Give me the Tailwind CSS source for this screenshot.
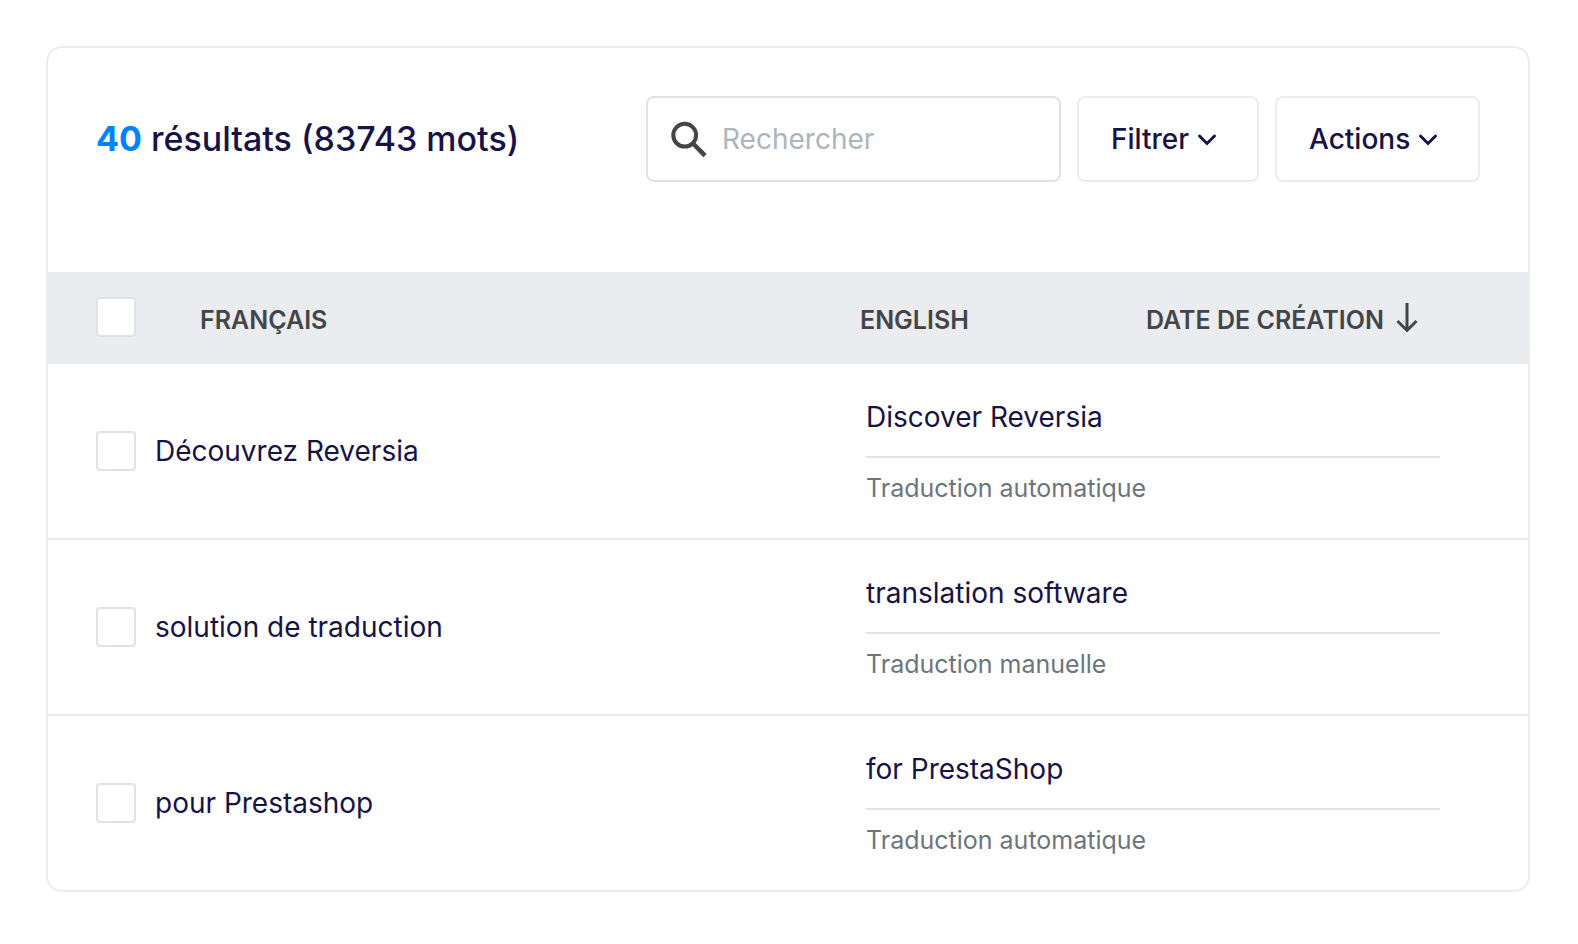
<!DOCTYPE html>
<html lang="fr">
<head>
<meta charset="utf-8">
<meta name="viewport" content="width=device-width, initial-scale=1">
<title>Traductions</title>
<script src="https://cdn.jsdelivr.net/npm/@tailwindcss/browser@4"></script>
</head>
<body class="bg-white p-[46px] pr-12 font-[Inter,sans-serif] text-[28px] leading-[42px] text-[#171347]">
<main class="overflow-hidden rounded-2xl border-2 border-[#ebecf0] bg-white">
  <header class="flex items-center gap-4 px-12 pt-12 pb-[90px]">
    <h1 class="mr-auto whitespace-nowrap text-[34px] font-medium"><span class="font-bold text-[#0083ff]">40</span> résultats (83743 mots)</h1>
    <label class="flex h-[86px] w-[415px] items-center gap-3 rounded-lg border-2 border-[#dee3e8] pr-6 pl-[22px]">
      <svg class="size-10 shrink-0" viewBox="0 0 40 40" fill="none" stroke="#444548" stroke-width="4" aria-hidden="true"><circle cx="14.7" cy="16.2" r="11.4"/><path d="M23 24.5 35 36.7" stroke-width="4.6"/></svg>
      <input type="search" aria-label="Rechercher" placeholder="Rechercher" class="w-full min-w-0 bg-transparent outline-none placeholder:text-[#adb5bd]">
    </label>
    <button type="button" class="flex h-[86px] w-[182px] items-center gap-2 rounded-lg border-2 border-[#ebecf0] pl-8 font-medium">Filtrer
      <svg class="size-5" viewBox="0 0 20 20" fill="none" stroke="currentColor" stroke-width="3" stroke-linecap="round" aria-hidden="true"><path d="M2.5 7 10 14.5 17.5 7"/></svg>
    </button>
    <button type="button" class="flex h-[86px] w-[205px] items-center gap-2 rounded-lg border-2 border-[#ebecf0] pl-8 font-medium">Actions
      <svg class="size-5" viewBox="0 0 20 20" fill="none" stroke="currentColor" stroke-width="3" stroke-linecap="round" aria-hidden="true"><path d="M2.5 7 10 14.5 17.5 7"/></svg>
    </button>
  </header>
  <table class="w-full table-fixed text-left">
    <colgroup><col class="w-[152px]"><col><col class="w-[286px]"><col class="w-[382px]"></colgroup>
    <thead class="bg-[#ebecf0] text-[25px] text-[#444548]">
      <tr class="h-[92px]">
        <th class="pl-12 pb-0.5"><input type="checkbox" aria-label="Tout sélectionner" class="block size-10 appearance-none rounded border-2 border-[#dee3e8] bg-white checked:bg-[#0083ff]"></th>
        <th scope="col" class="pt-1 font-semibold">FRANÇAIS</th>
        <th scope="col" class="pt-1 font-semibold">ENGLISH</th>
        <th scope="col" class="pt-1 font-semibold"><button type="button" class="flex items-center gap-3 whitespace-nowrap">DATE DE CRÉATION
          <svg class="h-[34px] w-[22px]" viewBox="0 0 22 34" fill="none" stroke="currentColor" stroke-width="3" aria-hidden="true"><path d="M11 0v27M1.5 18 11 27.5 20.5 18"/></svg>
        </button></th>
      </tr>
    </thead>
    <tbody class="divide-y-2 divide-[#ebecf0]">
      <tr>
        <td colspan="2" class="pl-12"><label class="flex items-center gap-[19px]"><input type="checkbox" class="size-10 appearance-none rounded border-2 border-[#dee3e8] bg-white checked:bg-[#0083ff]">Découvrez Reversia</label></td>
        <td colspan="2" class="pt-8 pr-[88px] pb-[30px] pl-1.5"><p class="border-b-2 border-[#dee3e8] pb-[18px]">Discover Reversia</p><p class="pt-2.5 text-[25px] leading-10 text-[#6c757d]">Traduction automatique</p></td>
      </tr>
      <tr>
        <td colspan="2" class="pl-12"><label class="flex items-center gap-[19px]"><input type="checkbox" class="size-10 appearance-none rounded border-2 border-[#dee3e8] bg-white checked:bg-[#0083ff]">solution de traduction</label></td>
        <td colspan="2" class="pt-8 pr-[88px] pb-[30px] pl-1.5"><p class="border-b-2 border-[#dee3e8] pb-[18px]">translation software</p><p class="pt-2.5 text-[25px] leading-10 text-[#6c757d]">Traduction manuelle</p></td>
      </tr>
      <tr>
        <td colspan="2" class="pl-12"><label class="flex items-center gap-[19px]"><input type="checkbox" class="size-10 appearance-none rounded border-2 border-[#dee3e8] bg-white checked:bg-[#0083ff]">pour Prestashop</label></td>
        <td colspan="2" class="pt-8 pr-[88px] pb-[30px] pl-1.5"><p class="border-b-2 border-[#dee3e8] pb-[18px]">for PrestaShop</p><p class="pt-2.5 text-[25px] leading-10 text-[#6c757d]">Traduction automatique</p></td>
      </tr>
    </tbody>
  </table>
</main>
</body>
</html>
